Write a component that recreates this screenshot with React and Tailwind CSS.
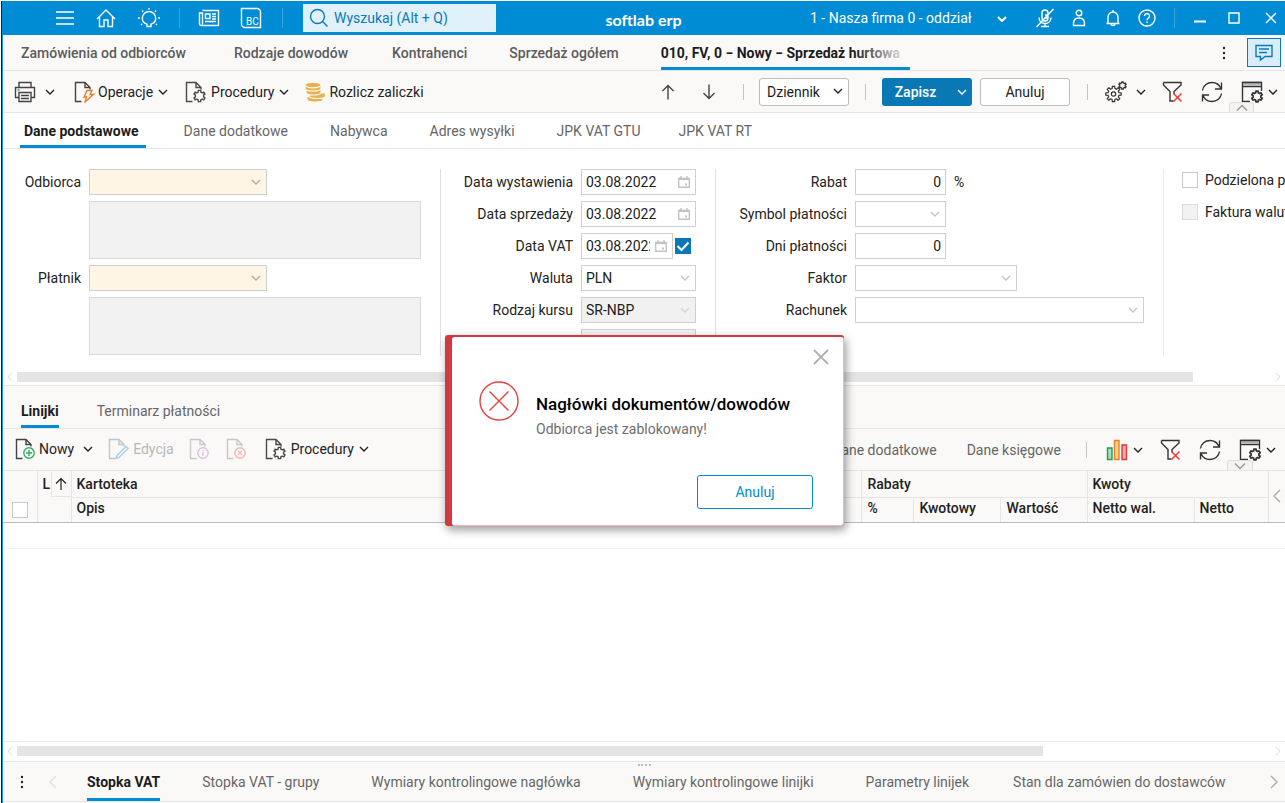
import { useState } from "react";
import clsx from "clsx";

const documentTabs = [
  { label: "Zamówienia od odbiorców", gap: "" },
  { label: "Rodzaje dowodów", gap: "ml-12" },
  { label: "Kontrahenci", gap: "ml-11" },
  { label: "Sprzedaż ogółem", gap: "ml-[42px]" },
];

const formTabs = [
  { label: "Dane dodatkowe", gap: "ml-[38px]" },
  { label: "Nabywca", gap: "ml-[42px]" },
  { label: "Adres wysyłki", gap: "ml-[42px]" },
  { label: "JPK VAT GTU", gap: "ml-[42px]" },
  { label: "JPK VAT RT", gap: "ml-[38px]" },
];

const footerTabs = [
  { label: "Stopka VAT - grupy", gap: "ml-[42px]" },
  { label: "Wymiary kontrolingowe nagłówka", gap: "ml-[52px]" },
  { label: "Wymiary kontrolingowe linijki", gap: "ml-[52px]" },
  { label: "Parametry linijek", gap: "ml-[52px]" },
  { label: "Stan dla zamówien do dostawców", gap: "ml-11" },
];

const Svg = ({ w = 22, h = 22, className, children, ...rest }) => (
  <svg
    width={w}
    height={h}
    viewBox={`0 0 ${w} ${h}`}
    fill="none"
    stroke="currentColor"
    strokeWidth="1.4"
    className={clsx("shrink-0", className)}
    aria-hidden="true"
    {...rest}
  >
    {children}
  </svg>
);

const Chevron = ({ className }) => (
  <Svg w={10} h={6} className={className}>
    <path d="M1 1l4 4 4-4" />
  </Svg>
);

const WideChevron = ({ className }) => (
  <Svg w={14} h={8} className={className}>
    <path d="M2 1.500l5 5 5-5" />
  </Svg>
);

const Side = ({ right, className }) => (
  <Svg w={8} h={14} className={className}>
    <path d={right ? "M1 1l6 6-6 6" : "M7 1L1 7l6 6"} />
  </Svg>
);

// page outline shared by the document icons, the badge goes in the corner
const PageIcon = ({ className, children }) => (
  <Svg className={className}>
    <path d="M7.500 20.500H1.500v-19H11l5 5v2M11 1.500v5h5" />
    {children}
  </Svg>
);

// cog outline: every tooth is four points, two on the rim and two at the root
const cogPath = (cx, cy, r, teeth) => {
  const points = [];
  for (let i = 0; i < teeth; i++) {
    const a = (i / teeth) * Math.PI * 2 - Math.PI / 2;
    const s = Math.PI / teeth;
    [
      [a - s * 0.6, r * 0.72],
      [a - s * 0.4, r],
      [a + s * 0.4, r],
      [a + s * 0.6, r * 0.72],
    ].forEach(([angle, radius]) => {
      points.push(`${(cx + Math.cos(angle) * radius).toFixed(2)} ${(cy + Math.sin(angle) * radius).toFixed(2)}`);
    });
  }
  return `M${points.join("L")}Z`;
};

const Gear = ({ x, y, r = 5.8, teeth = 6, ...rest }) => (
  <path d={cogPath(x, y, r, teeth)} strokeLinejoin="round" {...rest} />
);

const GearPage = () => (
  <PageIcon className="text-[#4a4a4a]">
    <Gear x={14.5} y={15} />
  </PageIcon>
);

const FilterIcon = () => (
  <Svg className="text-[#333]">
    <path d="M1.500 1.500h17.500v2.500L12 10.500V13M1.500 1.500V4L8 10.500V20h3.500" />
    <path d="M11.500 12.500l8 8M19.500 12.500l-8 8" stroke="#e8403c" strokeWidth="1.600" />
  </Svg>
);

const RefreshIcon = () => (
  <Svg className="text-[#333]">
    <path d="M1.500 9.500C2.200 4.800 6 1.500 11 1.500c4 0 7.500 2.500 9 6M20.500 1.500V8H14M20.500 12.500c-.7 4.700-4.500 8-9.500 8-4 0-7.500-2.500-9-6M1.500 20.500V14H8" />
  </Svg>
);

const WindowIcon = () => (
  <Svg className="text-[#333]">
    <path d="M9 20.500H1.500v-19h19V10M1.500 5.500h19" />
    <path d="M2 3.500h18" stroke="#b4b4b4" strokeWidth="2.500" />
    <path d="M1.500 1.500h19" />
    <Gear x={16} y={15.5} r={5.5} strokeWidth="1.700" />
  </Svg>
);

const Divider = ({ className }) => <span className={clsx("h-4 w-px bg-[#c4c4c4]", className)} />;

const Tab = ({ label, gap, className }) => (
  <button type="button" className={clsx("whitespace-nowrap", gap, className)}>
    {label}
  </button>
);

const Select = ({ id, value = "", label, disabled, className, field, chevron = "text-[#c4c4c4]" }) => (
  <div className={clsx("relative", className)}>
    <select
      id={id}
      aria-label={label}
      disabled={disabled}
      defaultValue={value}
      className={clsx(
        "block w-full appearance-none border text-sm leading-5 text-[#1c1c1c] opacity-100",
        field || "h-[26px] border-[#cfcfcf] px-1",
        disabled ? "bg-[#f1f1f1]" : !field && "bg-white"
      )}
    >
      <option value={value}>{value}</option>
    </select>
    <Chevron className={clsx("pointer-events-none absolute right-[6px] top-[10px]", chevron)} />
  </div>
);

const DateInput = ({ id, width = "w-[115px]" }) => (
  <div className={clsx("relative h-[26px]", width)}>
    <input
      id={id}
      type="text"
      defaultValue="03.08.2022"
      className="block h-full w-full border border-[#cfcfcf] bg-white pl-1 pr-[22px] text-sm text-[#1c1c1c]"
    />
    <Svg w={12} h={12} className="pointer-events-none absolute right-[6px] top-[7px] text-[#c4c4c4]">
      <path d="M.7 2.500h10.600v8.800H.7zM3 0v2M9 0v2" />
      <path d="M.5 3h11" strokeWidth="2.200" />
      <path d="M7 8.500h2" strokeWidth="2" />
    </Svg>
  </div>
);

const NumberInput = ({ id }) => (
  <input
    id={id}
    type="text"
    defaultValue="0"
    className="h-[26px] w-[91px] border border-[#cfcfcf] bg-white px-1 text-right text-sm text-[#1c1c1c]"
  />
);

const Field = ({ id, label, children }) => (
  <div className="flex items-center">
    <label htmlFor={id} className="mr-2 flex-1 whitespace-nowrap text-right">
      {label}
    </label>
    {children}
  </div>
);

const HScroll = ({ thumb }) => (
  <div className="flex h-4 items-center">
    <Side className="mx-[3px] h-[10px] text-[#d8d8d8]" />
    <div className="flex-1">
      <div className={clsx("h-[10px] bg-[#e4e4e4]", thumb)} />
    </div>
    <Side right className="mx-[3px] h-[10px] text-[#d8d8d8]" />
  </div>
);

const HeaderBar = () => (
  <header className="flex h-[34px] items-center bg-[#008cd4] text-white">
    <div className="flex flex-1 items-center">
      <button type="button" aria-label="Menu" className="ml-[42px] flex w-[42px] justify-center">
        <Svg w={20} h={20}><path d="M1 4h18M1 10h18M1 16h18" /></Svg>
      </button>
      <button type="button" aria-label="Start" className="flex w-10 justify-center">
        <Svg w={20} h={20}><path d="M1 11l9-9 9 9M3.500 9v9.500h4.500V12h4v6.500h4.500V9" /></Svg>
      </button>
      <button type="button" aria-label="Podpowiedzi" className="flex w-[46px] justify-center">
        <Svg w={24} h={20}>
          <path d="M10 18.500v-2.300c-3-1-4.700-3.200-4.700-6a6.700 6.700 0 0 1 13.400 0c0 2.800-1.700 5-4.700 6v2.300zM12 0v1.500M5 2.500l1.200 1.200M19 2.500l-1.200 1.200M1 10h1.800M21.200 10H23M4 17l1.200-1.200M20 17l-1.200-1.200" />
        </Svg>
      </button>
      <span className="ml-[7px] mr-2 h-5 w-px bg-[#3ba5dd]" />
      <button type="button" aria-label="Wiadomości" className="flex w-[42px] justify-center">
        <Svg w={22} h={18}>
          <path d="M4.500 1.500h16v15H3A1.500 1.500 0 0 1 1.500 15V4h3v11.500M7.500 5h4.500v4.500H7.500zM14 5h4M14 7.500h4M14 10h4M7 12.500h11" />
        </Svg>
      </button>
      <button type="button" aria-label="BC" className="flex w-[42px] justify-center">
        <Svg w={22} h={22}>
          <path d="M1.500 1.500h15.500a3.500 3.500 0 0 1 3.500 3.500v15.500H5A3.500 3.500 0 0 1 1.500 17z" />
          <text x="6" y="18" fontSize="10" fill="#fff" stroke="none" fontFamily="Roboto">BC</text>
        </Svg>
      </button>
      <span className="ml-[10px] mr-5 h-5 w-px bg-[#3ba5dd]" />
      <div className="relative h-7 w-[193px]">
        <Svg w={20} h={20} className="absolute left-[6px] top-1 text-[#0a7ab8]">
          <circle cx="8.500" cy="8.500" r="7" />
          <path d="M13.500 13.500l5 5" />
        </Svg>
        <input
          type="text"
          aria-label="Wyszukaj"
          placeholder="Wyszukaj (Alt + Q)"
          className="h-full w-full bg-[#e1f1fa] pl-[31px] text-sm placeholder:text-[#0a7ab8] placeholder:opacity-100"
        />
      </div>
    </div>
    <span className="pt-[3px] font-['Lato'] text-base font-bold">softlab erp</span>
    <div className="flex flex-1 items-center justify-end">
      <div className="relative mr-[18px] w-[200px]">
        <select aria-label="Firma" className="w-full appearance-none bg-transparent text-sm text-white">
          <option>1 - Nasza firma 0 - oddział</option>
        </select>
        <Chevron className="pointer-events-none absolute right-[3px] top-[8px] stroke-2" />
      </div>
      <button type="button" aria-label="Mikrofon" className="flex w-[34px] justify-center">
        <Svg w={20} h={20}>
          <path d="M7 10V5a3 3 0 0 1 6 0v5a3 3 0 0 1-6 0zM4 9.500c0 3.500 2.500 6 6 6s6-2.500 6-6M10 15.500v3M6 18.500h8M18.500 1l-17 18M9 10h4M10 7h3" />
        </Svg>
      </button>
      <button type="button" aria-label="Użytkownik" className="flex w-[34px] justify-center">
        <Svg w={16} h={18}>
          <circle cx="8" cy="4" r="2.800" />
          <path d="M2.500 16.500v-2c0-3.500 2-5.500 5.500-5.500s5.500 2 5.500 5.500v2z" />
        </Svg>
      </button>
      <button type="button" aria-label="Powiadomienia" className="flex w-[34px] justify-center">
        <Svg w={16} h={18}>
          <path d="M1.500 14.500h13M3 14.500V8a5 5 0 0 1 10 0v6.500M8 1v2M6 14.500a2 2 0 0 0 4 0" />
        </Svg>
      </button>
      <button type="button" aria-label="Pomoc" className="flex w-[34px] justify-center">
        <Svg w={18} h={18}>
          <circle cx="9" cy="9" r="8" />
          <path d="M6.500 7a2.500 2.500 0 1 1 3.800 2.200c-1 .6-1.300 1-1.300 2M9 12.500V14" />
        </Svg>
      </button>
      <span className="ml-[10px] mr-2 h-5 w-px bg-[#3ba5dd]" />
      <button type="button" aria-label="Minimalizuj" className="flex w-[34px] justify-center">
        <Svg w={12} h={12} strokeWidth="2"><path d="M0 9.500h12" /></Svg>
      </button>
      <button type="button" aria-label="Maksymalizuj" className="flex w-[34px] justify-center">
        <Svg w={12} h={12}><path d="M1 1h10v10H1z" /></Svg>
      </button>
      <button type="button" aria-label="Zamknij" className="flex w-[34px] justify-center pl-[6px]">
        <Svg w={12} h={12}><path d="M1 1l10 10M11 1L1 11" /></Svg>
      </button>
    </div>
  </header>
);

const DocumentTabs = () => (
  <nav className="flex h-9 items-stretch border-b border-[#e6e5e4] bg-[#faf9f8] pl-[18px] font-medium text-[#5c5c5c]">
    {documentTabs.map((tab) => (
      <Tab key={tab.label} {...tab} />
    ))}
    <button
      type="button"
      className="relative ml-[42px] w-[249px] overflow-hidden whitespace-nowrap border-b-[3px] border-[#008cd4] pt-[3px] text-left font-bold text-[#1c1c1c]"
    >
      010, FV, 0 − Nowy − Sprzedaż hurtowa
      <span className="absolute inset-y-0 right-0 w-14 bg-linear-to-r from-transparent to-[#faf9f8]" />
    </button>
    <button type="button" aria-label="Więcej" className="ml-auto flex w-6 items-center justify-center text-[#222]">
      <Svg w={4} h={14} fill="currentColor" stroke="none">
        <circle cx="2" cy="2" r="1.200" />
        <circle cx="2" cy="7" r="1.200" />
        <circle cx="2" cy="12" r="1.200" />
      </Svg>
    </button>
    <button
      type="button"
      aria-label="Komentarze"
      className="ml-[11px] mr-1 mt-[3px] flex h-[29px] w-[34px] items-center justify-center border border-[#0a7ab8] bg-[#d9edf9] text-[#0a7ab8]"
    >
      <Svg w={18} h={18}><path d="M1 1.500h16v11h-7L5.500 16v-3.500H1zM4 5h10M4 8.500h8" /></Svg>
    </button>
  </nav>
);

const MainToolbar = () => (
  <div className="relative flex h-[42px] items-center border-b border-[#e6e5e4] bg-[#faf9f8] pl-[11px] text-[#222]">
    <button type="button" aria-label="Drukuj" className="flex items-center gap-[9px]">
      <Svg className="text-[#444]">
        <path d="M5 6V1.500h12V6M5 16.500H1.500V6.500h19v10H17M5 11.500h12v9H5zM7 14.500h8M7 17.500h8" />
        <path d="M3.500 9h2" stroke="#008cd4" />
      </Svg>
      <Chevron />
    </button>
    <button type="button" className="ml-[19px] flex items-center gap-[5px]">
      <span className="flex items-center gap-0.5">
        <PageIcon className="text-[#444]">
          <path d="M13 9.500h5l-2 4h3.500L11 21l1.500-5H10z" stroke="#ee7d2b" />
        </PageIcon>
        Operacje
      </span>
      <Chevron />
    </button>
    <button type="button" className="ml-[17px] flex items-center gap-[5px]">
      <span className="flex items-center gap-1">
        <GearPage />
        Procedury
      </span>
      <Chevron />
    </button>
    <button type="button" className="ml-[15px] flex items-center gap-[3px]">
      <Svg strokeWidth="1.200" stroke="#faf9f8" fill="#e8b04e">
        <path d="M3 15.500v3c0 3.300 16 3.300 16 0v-3z" />
        <path d="M5 12v3c0 3.300 16.500 3.300 16.500 0v-3z" />
        <path d="M2 8.500v3c0 3.300 15 3.300 15 0v-3z" />
        <path d="M1 4v3.500c0 3.300 16 3.300 16 0V4z" />
        <ellipse cx="9" cy="4" rx="8" ry="2.800" />
      </Svg>
      Rozlicz zaliczki
    </button>
    <div className="ml-auto flex items-center">
      <button type="button" aria-label="Poprzedni">
        <Svg w={14} h={16} className="text-[#444]"><path d="M7 15.500V1.500M1.500 7L7 1.500 12.500 7" /></Svg>
      </button>
      <button type="button" aria-label="Następny" className="ml-[27px]">
        <Svg w={14} h={16} className="text-[#444]"><path d="M7 .5v14M1.500 9L7 14.500 12.500 9" /></Svg>
      </button>
      <Divider className="ml-[27px]" />
      <Select
        label="Dziennik"
        value="Dziennik"
        className="ml-[15px] w-[90px]"
        field="h-7 rounded-[3px] border-[#bcbcbc] bg-white px-[7px]"
        chevron="text-[#222]"
      />
      <Divider className="mx-4" />
      <button type="button" className="flex h-7 w-[90px] items-center rounded-[3px] bg-[#0a78b4] font-medium text-white">
        <span className="flex-1 pr-2">Zapisz</span>
        <Chevron className="mr-[5px]" />
      </button>
      <button type="button" className="ml-2 h-7 w-[90px] rounded-[3px] border border-[#bcbcbc] bg-white">
        Anuluj
      </button>
      <Divider className="mx-[17px]" />
      <button type="button" aria-label="Ustawienia" className="flex items-center gap-[9px]">
        <Svg className="text-[#333]">
          <Gear x={8.5} y={13} r={7.8} teeth={8} strokeWidth="1.200" />
          <circle cx="8.500" cy="13" r="2.200" strokeWidth="1.200" />
          <Gear x={17.5} y={4.5} r={3.8} teeth={6} strokeWidth="1.300" />
        </Svg>
        <Chevron />
      </button>
      <button type="button" aria-label="Usuń filtr" className="ml-4"><FilterIcon /></button>
      <button type="button" aria-label="Odśwież" className="ml-[17px]"><RefreshIcon /></button>
      <button type="button" aria-label="Widok" className="ml-[18px] mr-[7px] flex items-center gap-[5px]">
        <WindowIcon />
        <Chevron />
      </button>
    </div>
    <button
      type="button"
      aria-label="Zwiń"
      className="absolute bottom-0 right-[31px] flex h-[10px] w-[25px] items-center justify-center rounded-t-[3px] border border-b-0 border-[#ddd] bg-[#f4f3f2] text-[#999]"
    >
      <WideChevron className="rotate-180" />
    </button>
  </div>
);

const DocumentForm = () => (
  <form className="flex h-[220px] overflow-hidden pt-5 text-[#222]">
    <div className="flex w-[418px] shrink-0 flex-col gap-[6px]">
      <div className="flex items-center">
        <label htmlFor="odbiorca" className="mr-2 w-[78px] text-right">Odbiorca</label>
        <Select id="odbiorca" className="w-[178px]" field="h-[26px] border-[#cfcfcf] bg-[#fff5e5] px-1" chevron="text-[#d9a08c]" />
      </div>
      <textarea aria-label="Dane odbiorcy" disabled className="ml-[86px] h-[58px] resize-none border border-[#dadada] bg-[#f2f2f2]" />
      <div className="flex items-center">
        <label htmlFor="platnik" className="mr-2 w-[78px] text-right">Płatnik</label>
        <Select id="platnik" className="w-[178px]" field="h-[26px] border-[#cfcfcf] bg-[#fff5e5] px-1" chevron="text-[#d9a08c]" />
      </div>
      <textarea aria-label="Dane płatnika" disabled className="ml-[86px] h-[58px] resize-none border border-[#dadada] bg-[#f2f2f2]" />
    </div>
    <div className="ml-[19px] flex h-[187px] w-[256px] shrink-0 flex-col gap-[6px] border-l border-[#e0e0e0]">
      <Field id="wystawienie" label="Data wystawienia"><DateInput id="wystawienie" /></Field>
      <Field id="sprzedaz" label="Data sprzedaży"><DateInput id="sprzedaz" /></Field>
      <Field id="vat" label="Data VAT">
        <DateInput id="vat" width="w-[92px]" />
        <span className="relative ml-[2px] mr-[5px] flex">
          <input type="checkbox" aria-label="Data VAT aktywna" defaultChecked className="h-4 w-4 appearance-none bg-[#0a78b4]" />
          <Svg w={16} h={16} className="pointer-events-none absolute text-white" strokeWidth="2"><path d="M2.500 8l4 4 7-7.500" /></Svg>
        </span>
      </Field>
      <Field id="waluta" label="Waluta"><Select id="waluta" value="PLN" className="w-[115px]" /></Field>
      <Field id="kurs" label="Rodzaj kursu"><Select id="kurs" value="SR-NBP" disabled className="w-[115px]" chevron="text-[#d4d4d4]" /></Field>
      <div className="flex justify-end"><Select label="Tabela kursu" disabled className="w-[115px]" /></div>
    </div>
    <div className="ml-[19px] flex h-[187px] w-[448px] shrink-0 flex-col gap-[6px] border-l border-[#e0e0e0]">
      <div className="flex items-center">
        <label htmlFor="rabat" className="mr-2 w-[131px] text-right">Rabat</label>
        <NumberInput id="rabat" />
        <span className="ml-2">%</span>
      </div>
      <div className="flex items-center">
        <label htmlFor="symbol" className="mr-2 w-[131px] text-right">Symbol płatności</label>
        <Select id="symbol" className="w-[91px]" />
      </div>
      <div className="flex items-center">
        <label htmlFor="dni" className="mr-2 w-[131px] text-right">Dni płatności</label>
        <NumberInput id="dni" />
      </div>
      <div className="flex items-center">
        <label htmlFor="faktor" className="mr-2 w-[131px] text-right">Faktor</label>
        <Select id="faktor" className="w-[162px]" />
      </div>
      <div className="flex items-center">
        <label htmlFor="rachunek" className="mr-2 w-[131px] text-right">Rachunek</label>
        <Select id="rachunek" className="w-[289px]" />
      </div>
    </div>
    <div className="flex h-[187px] flex-1 flex-col gap-[10px] border-l border-[#ebebeb] pl-[18px]">
      <label className="flex h-[22px] items-center gap-[7px] whitespace-nowrap">
        <input type="checkbox" className="h-4 w-4 shrink-0 appearance-none border border-[#c8c8c8] bg-white" />
        Podzielona płatność
      </label>
      <label className="flex h-[22px] items-center gap-[7px] whitespace-nowrap">
        <input type="checkbox" disabled className="h-4 w-4 shrink-0 appearance-none border border-[#dcdcdc] bg-[#f2f2f2]" />
        Faktura walutowa
      </label>
    </div>
  </form>
);

const LinesToolbar = () => (
  <div className="relative flex h-[42px] items-center border-b border-[#e6e5e4] bg-[#faf9f8] pl-3 text-[#222]">
    <button type="button" className="flex items-center gap-[9px] pb-[2px]">
      <span className="flex items-center gap-0.5">
        <PageIcon className="text-[#444]">
          <circle cx="14" cy="15" r="5.200" stroke="#2fae5f" />
          <path d="M14 12v6M11 15h6" stroke="#2fae5f" />
        </PageIcon>
        Nowy
      </span>
      <Chevron />
    </button>
    <button type="button" disabled className="ml-[15px] flex items-center gap-[3px] pb-[2px] text-[#b8b8b8]">
      <PageIcon className="text-[#c4c4c4]">
        <path d="M9 17.500L18 8.500l2 2-9 9-3 1z" stroke="#a7d0ea" />
      </PageIcon>
      Edycja
    </button>
    <button type="button" disabled aria-label="Informacje" className="ml-[15px] pb-[2px] text-[#c8c8c8]">
      <PageIcon>
        <circle cx="14" cy="15" r="5.200" stroke="#dcbfe2" />
        <path d="M14 14v4M14 12v1" stroke="#dcbfe2" />
      </PageIcon>
    </button>
    <button type="button" disabled aria-label="Usuń" className="ml-[15px] pb-[2px] text-[#c8c8c8]">
      <PageIcon>
        <circle cx="14" cy="15" r="5.200" stroke="#f5b7b4" />
        <path d="M12 13l4 4M16 13l-4 4" stroke="#f5b7b4" />
      </PageIcon>
    </button>
    <button type="button" className="ml-[17px] flex items-center gap-[5px] pb-[2px]">
      <span className="flex items-center gap-1">
        <GearPage />
        Procedury
      </span>
      <Chevron />
    </button>
    <div className="ml-auto flex items-center">
      <button type="button" className="text-[#666]">Dane dodatkowe</button>
      <button type="button" className="ml-[30px] text-[#666]">Dane księgowe</button>
      <Divider className="ml-[25px] mr-[19px]" />
      <button type="button" aria-label="Wykres" className="flex items-center gap-[5px]">
        <Svg>
          <path d="M1.500 9h4.500v11.500H1.500z" stroke="#1f9d55" fill="#a9dcbd" />
          <path d="M8.500 1.500H13v19H8.500z" stroke="#ee7d2b" fill="#ffd58a" />
          <path d="M16 6h4.500v14.500H16z" stroke="#d93a3a" fill="#f2a9a9" />
        </Svg>
        <Chevron />
      </button>
      <button type="button" aria-label="Usuń filtr" className="ml-[17px]"><FilterIcon /></button>
      <button type="button" aria-label="Odśwież" className="ml-[17px]"><RefreshIcon /></button>
      <button type="button" aria-label="Widok" className="ml-[18px] mr-[9px] flex items-center gap-[5px]">
        <WindowIcon />
        <Chevron />
      </button>
    </div>
    <button
      type="button"
      aria-label="Rozwiń"
      className="absolute bottom-0 right-8 flex h-[10px] w-[26px] items-center justify-center rounded-t-[3px] border border-b-0 border-[#ddd] bg-[#f4f3f2] text-[#999]"
    >
      <WideChevron />
    </button>
  </div>
);

const LinesTable = () => (
  <table className="w-full table-fixed border-collapse text-left text-[#222]">
    <colgroup>
      <col className="w-[34px]" />
      <col className="w-[34px]" />
      <col />
      <col className="w-[52px]" />
      <col className="w-[87px]" />
      <col className="w-[86px]" />
      <col className="w-[107px]" />
      <col className="w-[74px]" />
      <col className="w-[17px]" />
    </colgroup>
    <thead className="bg-[#faf9f8] [&_th]:font-medium">
      <tr className="h-[26px]">
        <th rowSpan={2} className="border-b border-b-[#bdbbb9] pb-1 pl-[9px] align-bottom">
          <input type="checkbox" aria-label="Zaznacz wszystko" className="block h-4 w-4 appearance-none border border-[#c8c8c8] bg-white" />
        </th>
        <th className="border-l border-[#e6e5e4] p-0">
          <div className="flex h-[25px] items-center pl-[5px]">
            L
            <span className="ml-auto flex h-full w-5 items-center justify-center border-b border-l border-[#e6e5e4]">
              <Svg w={12} h={14} strokeWidth="1.200"><path d="M6 13V1.500M1 6.500l5-5 5 5" /></Svg>
            </span>
          </div>
        </th>
        <th className="border border-t-0 border-[#e6e5e4] px-[5px]">Kartoteka</th>
        <th colSpan={3} className="border border-t-0 border-[#e6e5e4] px-[5px]">Rabaty</th>
        <th colSpan={2} className="border border-t-0 border-[#e6e5e4] px-[5px]">Kwoty</th>
        <th rowSpan={2} className="border-b border-b-[#bdbbb9] p-0 text-[#aaa]">
          <Side className="ml-auto mr-1" />
        </th>
      </tr>
      <tr className="h-[25px] [&>th]:border-b [&>th]:border-b-[#bdbbb9] [&>th]:pb-1">
        <th className="border-l border-[#e6e5e4]" />
        <th className="border-x border-[#e6e5e4] px-[5px]">Opis</th>
        <th className="border-x border-[#e6e5e4] px-[5px]">%</th>
        <th className="border-x border-[#e6e5e4] px-[5px]">Kwotowy</th>
        <th className="border-x border-[#e6e5e4] px-[5px]">Wartość</th>
        <th className="border-x border-[#e6e5e4] px-[5px]">Netto wal.</th>
        <th className="border-x border-[#e6e5e4] px-[5px]">Netto</th>
      </tr>
    </thead>
    <tbody>
      <tr className="h-[26px] border-b border-[#f2f2f2]">
        <td colSpan={9} />
      </tr>
    </tbody>
  </table>
);

const ErrorDialog = ({ onClose }) => (
  <div className="pointer-events-none absolute inset-x-0 top-[335px] z-10 flex justify-center pl-1">
    <div
      role="alertdialog"
      aria-labelledby="error-title"
      className="pointer-events-auto w-[399px] rounded-[3px] bg-[#cf3b3f] pl-[7px] pt-[2px] shadow-[2px_4px_10px_rgba(0,0,0,0.4)]"
    >
      <div className="relative flex h-[189px] flex-col rounded-[3px] border-b border-r border-[#efb9ba] bg-white pl-[27px] pr-[30px] pt-11">
        <div className="flex gap-[17px]">
          <Svg w={40} h={40} className="text-[#e8403c]">
            <circle cx="20" cy="20" r="19" />
            <path d="M10.500 10.500l19 19M29.500 10.500l-19 19" />
          </Svg>
          <div className="pt-[11px]">
            <h2 id="error-title" className="whitespace-nowrap text-[17px] font-medium leading-6 text-black">
              Nagłówki dokumentów/dowodów
            </h2>
            <p className="pt-[3px] leading-5 text-[#6e6e6e]">Odbiorca jest zablokowany!</p>
          </div>
        </div>
        <button
          type="button"
          onClick={onClose}
          className="mb-4 ml-auto mt-auto h-[34px] w-[116px] rounded-[3px] border border-[#008cd4] bg-white text-[#008cd4]"
        >
          Anuluj
        </button>
        <button type="button" aria-label="Zamknij" onClick={onClose} className="absolute right-[14px] top-3 text-[#b0b0b0]">
          <Svg w={16} h={16} strokeWidth="1.800"><path d="M1 1l14 14M15 1L1 15" /></Svg>
        </button>
      </div>
    </div>
  </div>
);

const App = () => {
  const [open, setOpen] = useState(true);

  return (
    <div className="relative flex min-h-screen flex-col overflow-hidden bg-white pl-px pt-px font-['Roboto',sans-serif] text-sm leading-5">
      <div className="flex flex-1 flex-col border-l border-[#12242e]">
        <HeaderBar />
        <div className="flex flex-1 flex-col border-l border-[#1a95d8] pb-px">
          <DocumentTabs />
          <MainToolbar />

          <nav className="flex h-9 items-stretch border-b border-[#e6e5e4] pl-[17px] text-[#666]">
            <button type="button" className="border-b-[3px] border-[#008cd4] pl-1 pr-[7px] pt-[3px] font-bold text-[#1c1c1c]">
              Dane podstawowe
            </button>
            {formTabs.map((tab) => (
              <Tab key={tab.label} {...tab} />
            ))}
          </nav>
          <DocumentForm />
          <HScroll thumb="w-15/16" />

          <nav className="flex h-11 items-stretch border-y border-[#e6e5e4] bg-[#faf9f8] pl-[18px] pt-[7px] text-[#666]">
            <button type="button" className="border-b-[3px] border-[#008cd4] pt-[3px] font-bold text-[#1c1c1c]">
              Linijki
            </button>
            <Tab label="Terminarz płatności" gap="ml-[38px]" />
          </nav>
          <LinesToolbar />
          <LinesTable />

          <div className="mt-auto border-t border-[#ececec] pb-[2px] pt-px">
            <HScroll thumb="w-9/11" />
          </div>
          <nav className="relative flex h-[41px] items-stretch border-y border-[#e6e5e4] bg-[#faf9f8] text-[#666]">
            <span className="absolute inset-x-0 top-[2px] mx-auto w-[13px] border-t-2 border-dotted border-[#bbb]" />
            <button type="button" aria-label="Więcej" className="flex w-[38px] items-center justify-center text-[#222]">
              <Svg w={4} h={14} fill="currentColor" stroke="none">
                <circle cx="2" cy="2" r="1.200" />
                <circle cx="2" cy="7" r="1.200" />
                <circle cx="2" cy="12" r="1.200" />
              </Svg>
            </button>
            <button type="button" aria-label="Wstecz" className="mx-2">
              <Side className="text-[#dedede]" />
            </button>
            <button type="button" className="ml-[22px] border-b-[3px] border-[#008cd4] pt-[3px] font-bold text-[#1c1c1c]">
              Stopka VAT
            </button>
            {footerTabs.map((tab) => (
              <Tab key={tab.label} {...tab} />
            ))}
            <button type="button" aria-label="Dalej" className="ml-auto mr-[7px]">
              <Side right className="text-[#aaa]" />
            </button>
          </nav>
        </div>
      </div>
      {open && <ErrorDialog onClose={() => setOpen(false)} />}
    </div>
  );
};

export default App;
